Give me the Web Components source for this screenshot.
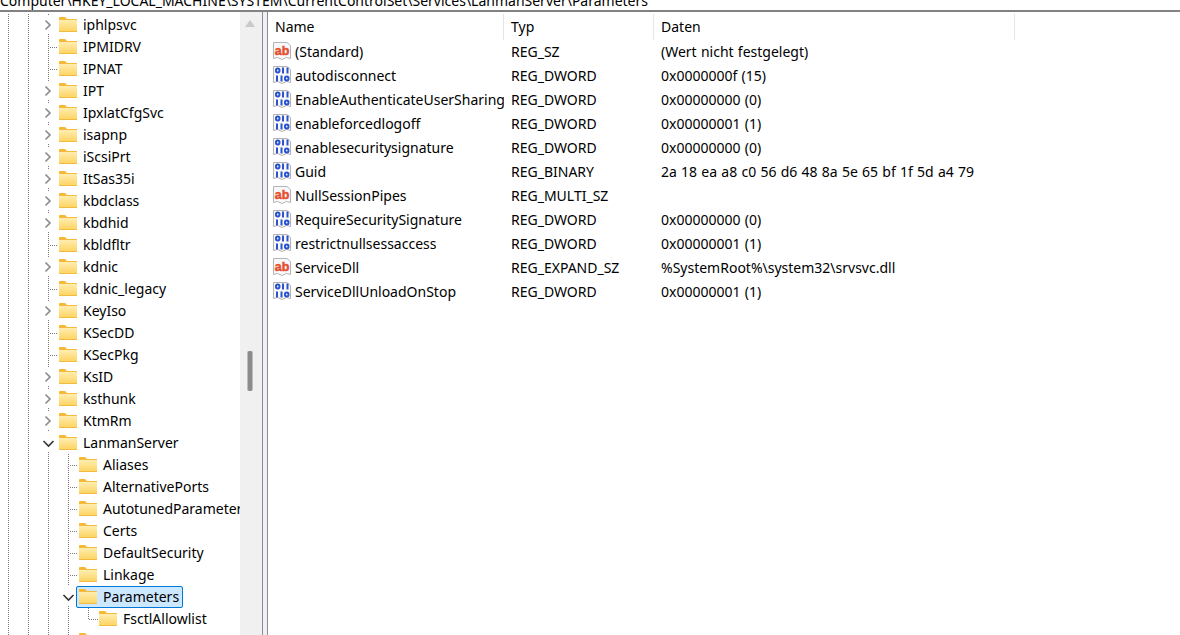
<!DOCTYPE html>
<html>
<head>
<meta charset="utf-8">
<style>
    html, body { margin: 0; height: 100%; overflow: hidden; background: #fff; }
    body { font: 14px "Noto Sans", "Open Sans", sans-serif; color: #000; }
</style>
</head>
<body>
<regedit-window></regedit-window>

<script>
(function () {
    const FONT = '"Noto Sans", "Open Sans", sans-serif';

    const FOLDER = `
      <svg width="18" height="15" viewBox="0 0 18 15">
        <defs><linearGradient id="fg" x1="0" y1="0" x2="0" y2="1">
          <stop offset="0" stop-color="#ffedb0"/><stop offset="1" stop-color="#fdd565"/>
        </linearGradient></defs>
        <path d="M0 1q0-1 1-1h5l2 2h-8z" fill="#f6b82e"/>
        <rect x="0" y="2" width="18" height="13" fill="#f3bb3f"/>
        <rect x="0" y="3" width="18" height="11" fill="url(#fg)"/>
      </svg>`;

    class RegFolder extends HTMLElement {
        constructor() {
            super();
            this.attachShadow({ mode: "open" }).innerHTML = `
              <style>:host { display: block; width: 18px; height: 15px; } svg { display: block; }</style>
              ${FOLDER}`;
        }
    }
    customElements.define("reg-folder", RegFolder);

    // one 20px indent column of the tree: guide dots and/or the expander
    class TreeGuide extends HTMLElement {
        constructor() {
            super();
            this.attachShadow({ mode: "open" });
        }
        connectedCallback() {
            let kind = this.getAttribute("kind");
            let dots = 'stroke="#7a7a7a" stroke-dasharray="1 1" fill="none"';
            let body = "";
            if (kind == "pipe") body = `<path d="M8.5 0V22" ${dots}/>`;
            if (kind == "tee") body = `<path d="M8.5 0V22M10 11.5H18" ${dots}/>`;
            if (kind == "ell") body = `<path d="M8.5 0V12M9 11.5H18" ${dots}/>`;
            if (kind == "closed") body = `<path d="M8.5 0V2M8.5 20V22" ${dots}/>
              <path d="M5.5 6.5L10 11L5.5 15.5" stroke="#8a8a8a" stroke-width="1.6" fill="none"/>`;
            if (kind == "open") body = `<path d="M8.5 20V22" ${dots}/>
              <path d="M3.5 9L8.5 14L13.5 9" stroke="#333" stroke-width="1.6" fill="none"/>`;
            this.shadowRoot.innerHTML = `
              <style>:host { display: block; width: 20px; height: 22px; flex: none; } svg { display: block; }</style>
              <svg width="20" height="22" viewBox="0 0 20 22">${body}</svg>`;
        }
    }
    customElements.define("tree-guide", TreeGuide);

    class TreeRow extends HTMLElement {
        constructor() {
            super();
            this.attachShadow({ mode: "open" });
        }
        connectedCallback() {
            let guides = (this.getAttribute("guides") || "").split(" ").filter(Boolean);
            this.shadowRoot.innerHTML = `
              <style>
                :host { display: flex; height: 22px; white-space: nowrap; align-items: flex-start; }
                .item { display: flex; height: 22px; box-sizing: border-box; margin-left: -1px; flex: none; }
                reg-folder { margin-top: 3px; }
                .label { margin-left: 6px; line-height: 22px; }
                :host([selected]) .item {
                    border: 1px solid #0078d7; border-radius: 2px; background: #cce8ff;
                    margin-left: -4px; padding: 0 3px 0 2px;
                }
                :host([selected]) reg-folder { margin-top: 2px; }
                :host([selected]) .label { margin-top: -1px; }
              </style>
              ${guides.map(k => `<tree-guide kind="${k}"></tree-guide>`).join("")}
              <div class="item"><reg-folder></reg-folder><span class="label"><slot></slot></span></div>`;
        }
    }
    customElements.define("tree-row", TreeRow);

    class RegScrollbar extends HTMLElement {
        constructor() {
            super();
            this.attachShadow({ mode: "open" }).innerHTML = `
              <style>
                :host { display: flex; flex-direction: column; width: 22px; flex: none; background: #f0f0f0; }
                svg { margin: 8px 0 0 5px; display: block; }
                .gap { height: 324px; flex: none; }
                .thumb { width: 4px; height: 40px; margin-left: 7px; background: #8b8b8b; border-radius: 2px; border: 0 solid #bdbdbd; border-width: 0 1px; }
              </style>
              <svg width="10" height="7" viewBox="0 0 10 7"><path d="M5 0L10 7H0z" fill="#c9c9c9"/></svg>
              <div class="gap"></div>
              <div class="thumb"></div>`;
        }
    }
    customElements.define("reg-scrollbar", RegScrollbar);

    class RegTree extends HTMLElement {
        constructor() {
            super();
            this.attachShadow({ mode: "open" }).innerHTML = `
              <style>
                :host { display: flex; width: 262px; flex: none; overflow: hidden; }
                .rows { width: 240px; flex: none; overflow: hidden; padding-top: 2px; box-sizing: border-box; }
              </style>
              <div class="rows"><slot></slot></div>
              <reg-scrollbar></reg-scrollbar>`;
        }
    }
    customElements.define("reg-tree", RegTree);

    class RegSplitter extends HTMLElement {
        constructor() {
            super();
            this.attachShadow({ mode: "open" }).innerHTML = `
              <style>
                :host { display: block; width: 4px; flex: none; background: #f0f0f0; border: 0 solid #8c8c9c; border-width: 0 1px; }
              </style>`;
        }
    }
    customElements.define("reg-splitter", RegSplitter);

    class RegIcon extends HTMLElement {
        constructor() {
            super();
            this.attachShadow({ mode: "open" });
        }
        connectedCallback() {
            let inner;
            if (this.getAttribute("kind") == "sz") {
                inner = `<text x="9" y="12.5" text-anchor="middle" font-family="Liberation Sans" font-weight="700" font-size="12.5" fill="#e2502f" stroke="#e2502f" stroke-width=".5">ab</text>`;
            } else {
                inner = `
                  <g fill="none" stroke="#2b54cc" stroke-width="2">
                    <rect x="3" y="2.5" width="3.5" height="4" rx="1.7"/>
                    <path d="M10 1.5V7.5"/>
                    <path d="M14.5 1.5V7.5"/>
                    <path d="M4 9.5V15.5"/>
                    <path d="M8.5 9.5V15.5"/>
                    <rect x="12" y="10.5" width="3.5" height="4" rx="1.7"/>
                  </g>`;
            }
            this.shadowRoot.innerHTML = `
              <style>:host { display: block; width: 18px; height: 18px; flex: none; } svg { display: block; }</style>
              <svg width="18" height="18" viewBox="0 0 18 18">
                <path d="M.5 .5H14L17.5 3.5V16.5L13.5 15.5 9 17.5 4.5 15.5 .5 16.5z" fill="#f8f8fb" stroke="#b4b4b4"/>
                ${inner}
              </svg>`;
        }
    }
    customElements.define("reg-icon", RegIcon);

    const COLS = "236px 150px 1fr";

    class ListHeader extends HTMLElement {
        constructor() {
            super();
            this.attachShadow({ mode: "open" }).innerHTML = `
              <style>
                :host { display: flex; height: 25px; margin-top: 3px; flex: none; width: 747px; line-height: 25px; }
                div { box-sizing: border-box; padding-left: 7px; border-right: 1px solid #e5e5e5; margin-top: -1px; }
              </style>
              <div style="width:236px">Name</div>
              <div style="width:150px">Typ</div>
              <div style="width:361px">Daten</div>`;
        }
    }
    customElements.define("list-header", ListHeader);

    class ListRow extends HTMLElement {
        constructor() {
            super();
            this.attachShadow({ mode: "open" });
        }
        connectedCallback() {
            this.shadowRoot.innerHTML = `
              <style>
                :host { display: grid; grid-template-columns: ${COLS}; height: 24px; line-height: 24px; white-space: nowrap; }
                .name { display: flex; align-items: center; padding-left: 5px; overflow: hidden; }
                .name reg-icon { margin-top: -2px; }
                .name span { margin-left: 4px; }
                .val { padding-left: 7px; }
                .data { word-spacing: .6px; }
              </style>
              <div class="name"><reg-icon kind="${this.getAttribute("kind")}"></reg-icon><span>${this.getAttribute("name")}</span></div>
              <div class="val">${this.getAttribute("type")}</div>
              <div class="val data"><slot></slot></div>`;
        }
    }
    customElements.define("list-row", ListRow);

    class RegList extends HTMLElement {
        constructor() {
            super();
            this.attachShadow({ mode: "open" }).innerHTML = `
              <style>:host { display: block; flex: 1; min-width: 0; overflow: hidden; }</style>
              <list-header></list-header>
              <slot></slot>`;
        }
    }
    customElements.define("reg-list", RegList);

    class RegeditWindow extends HTMLElement {
        constructor() {
            super();
            this.attachShadow({ mode: "open" }).innerHTML = `
              <style>
                :host { display: flex; flex-direction: column; height: 635px; width: 1180px; overflow: hidden; font-family: ${FONT}; font-size: 14px; }
                .addr { height: 10px; flex: none; overflow: hidden; display: flex; align-items: flex-end; border-bottom: 2px solid #828282; white-space: nowrap; }
                .addr span { line-height: 20px; margin-bottom: -1px; }
                .panes { flex: 1; min-height: 0; display: flex; }
              </style>
              <div class="addr"><span>Computer\\HKEY_LOCAL_MACHINE\\SYSTEM\\CurrentControlSet\\Services\\LanmanServer\\Parameters</span></div>
              <div class="panes">
                <reg-tree id="tree"></reg-tree>
                <reg-splitter></reg-splitter>
                <reg-list id="list"></reg-list>
              </div>`;

            let tree = [
                ["iphlpsvc", "c"], ["IPMIDRV", "l"], ["IPNAT", "l"], ["IPT", "c"], ["IpxlatCfgSvc", "c"],
                ["isapnp", "c"], ["iScsiPrt", "c"], ["ItSas35i", "c"], ["kbdclass", "c"], ["kbdhid", "c"],
                ["kbldfltr", "l"], ["kdnic", "c"], ["kdnic_legacy", "l"], ["KeyIso", "c"], ["KSecDD", "l"],
                ["KSecPkg", "l"], ["KsID", "c"], ["ksthunk", "c"], ["KtmRm", "c"]
            ];
            let out = this.shadowRoot.getElementById("tree");
            let add = (text, guides, selected) => {
                let row = document.createElement("tree-row");
                row.setAttribute("guides", guides);
                if (selected) row.setAttribute("selected", "");
                row.textContent = text;
                out.appendChild(row);
            };
            for (let [text, kind] of tree) {
                add(text, "pipe pipe " + (kind == "c" ? "closed" : "tee"));
            }
            add("LanmanServer", "pipe pipe open");
            for (let text of ["Aliases", "AlternativePorts", "AutotunedParameters", "Certs", "DefaultSecurity", "Linkage"]) {
                add(text, "pipe pipe pipe tee");
            }
            add("Parameters", "pipe pipe pipe open", true);
            add("FsctlAllowlist", "pipe pipe pipe pipe ell");
            add("", "pipe pipe pipe tee");

            let list = [
                ["sz", "(Standard)", "REG_SZ", "(Wert nicht festgelegt)"],
                ["dw", "autodisconnect", "REG_DWORD", "0x0000000f (15)"],
                ["dw", "EnableAuthenticateUserSharing", "REG_DWORD", "0x00000000 (0)"],
                ["dw", "enableforcedlogoff", "REG_DWORD", "0x00000001 (1)"],
                ["dw", "enablesecuritysignature", "REG_DWORD", "0x00000000 (0)"],
                ["dw", "Guid", "REG_BINARY", "2a 18 ea a8 c0 56 d6 48 8a 5e 65 bf 1f 5d a4 79"],
                ["sz", "NullSessionPipes", "REG_MULTI_SZ", ""],
                ["dw", "RequireSecuritySignature", "REG_DWORD", "0x00000000 (0)"],
                ["dw", "restrictnullsessaccess", "REG_DWORD", "0x00000001 (1)"],
                ["sz", "ServiceDll", "REG_EXPAND_SZ", "%SystemRoot%\\system32\\srvsvc.dll"],
                ["dw", "ServiceDllUnloadOnStop", "REG_DWORD", "0x00000001 (1)"]
            ];
            let listEl = this.shadowRoot.getElementById("list");
            for (let [kind, name, type, value] of list) {
                let row = document.createElement("list-row");
                row.setAttribute("kind", kind);
                row.setAttribute("name", name);
                row.setAttribute("type", type);
                row.textContent = value;
                listEl.appendChild(row);
            }
        }
    }
    customElements.define("regedit-window", RegeditWindow);
})();
</script>
</body>
</html>
